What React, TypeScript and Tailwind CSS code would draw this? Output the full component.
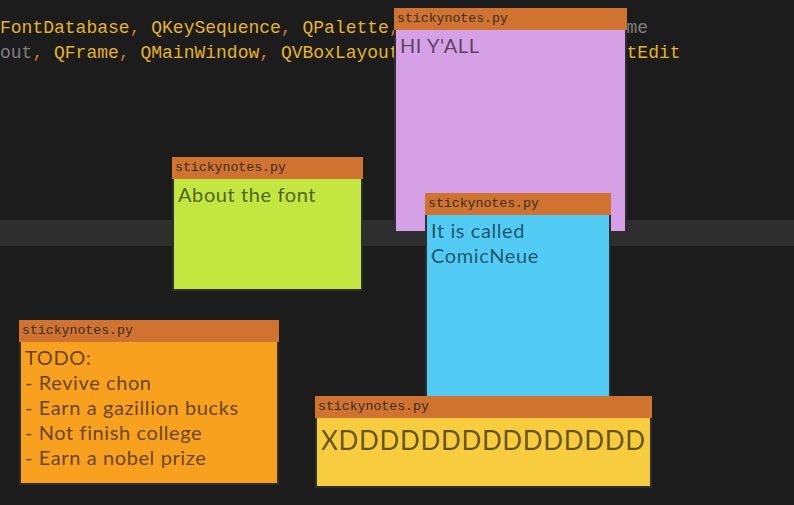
import type { ReactNode } from "react";

type NoteProps = {
  className: string;
  bodyClassName: string;
  children?: ReactNode;
};

function StickyNote({ className, bodyClassName, children }: NoteProps) {
  return (
    <div className={`absolute flex flex-col ${className}`}>
      <div className="flex h-[22px] shrink-0 items-center bg-[#d07331] pl-[3px] font-['Liberation_Mono',monospace] text-[13.2px] text-[#3a2d25]">
        stickynotes.py
      </div>
      <div
        className={`flex-1 border-x-2 border-b-2 border-[#2f2f2f] pl-[4px] font-['Lato',sans-serif] text-black/60 ${bodyClassName}`}
      >
        {children}
      </div>
    </div>
  );
}

const comma = "text-[#cc7832]";
const name = "text-[#e5b32c]";
const gray = "text-[#7f7f7f]";

export default function App() {
  return (
    <div className="relative h-[505px] w-[794px] overflow-hidden bg-[#1c1c1c]">
      {/* editor behind the notes */}
      <div className="flex flex-col pt-4 font-['Liberation_Mono',monospace] text-[18px] leading-[25px] whitespace-pre">
        <div className="h-[25px]">
          <span className={name}>FontDatabase</span>
          <span className={comma}>, </span>
          <span className={name}>QKeySequence</span>
          <span className={comma}>, </span>
          <span className={name}>QPalette</span>
          <span className={comma}>, </span>
          <span className={name}>QColor</span>
          <span className={comma}>, </span>
          <span className={name}>QIcon</span>
          <span className={gray}>  # theme</span>
        </div>
        <div className="h-[25px]">
          <span className={gray}>out</span>
          <span className={comma}>, </span>
          <span className={name}>QFrame</span>
          <span className={comma}>, </span>
          <span className={name}>QMainWindow</span>
          <span className={comma}>, </span>
          <span className={name}>QVBoxLayout</span>
          <span className={comma}>, </span>
          <span className={name}>QSpinBox</span>
          <span className={comma}>, </span>
          <span className={name}>QPlainTextEdit</span>
        </div>
        <div className="mt-[154px] h-[26px] bg-[#2e2e2e]" />
      </div>

      <StickyNote
        className="left-[394px] top-[8px] h-[225px] w-[233px]"
        bodyClassName="bg-[#d6a0e6] pt-[3px] text-[20px] leading-[25px] tracking-[0.6px]"
      >
        HI Y&apos;ALL
      </StickyNote>

      <StickyNote
        className="left-[172px] top-[157px] h-[134px] w-[191px]"
        bodyClassName="bg-[#c3e641] pt-[3px] text-[20px] leading-[25px] tracking-[0.6px]"
      >
        About the font
      </StickyNote>

      <StickyNote
        className="left-[425px] top-[193px] h-[227px] w-[186px]"
        bodyClassName="bg-[#52cbf5] pt-[3px] text-[20px] leading-[25px] tracking-[0.6px]"
      >
        <div>It is called</div>
        <div>ComicNeue</div>
      </StickyNote>

      <StickyNote
        className="left-[19px] top-[320px] h-[165px] w-[260px]"
        bodyClassName="bg-[#f7a11f] pt-[3px] text-[20px] leading-[25px] tracking-[0.6px]"
      >
        <div>TODO:</div>
        <div>- Revive chon</div>
        <div>- Earn a gazillion bucks</div>
        <div>- Not finish college</div>
        <div>- Earn a nobel prize</div>
      </StickyNote>

      <StickyNote
        className="left-[315px] top-[396px] h-[92px] w-[337px]"
        bodyClassName="bg-[#f7cc3f] pt-[4px] text-[26px] leading-[36px] tracking-[0.7px]"
      >
        XDDDDDDDDDDDDDDD
      </StickyNote>
    </div>
  );
}
